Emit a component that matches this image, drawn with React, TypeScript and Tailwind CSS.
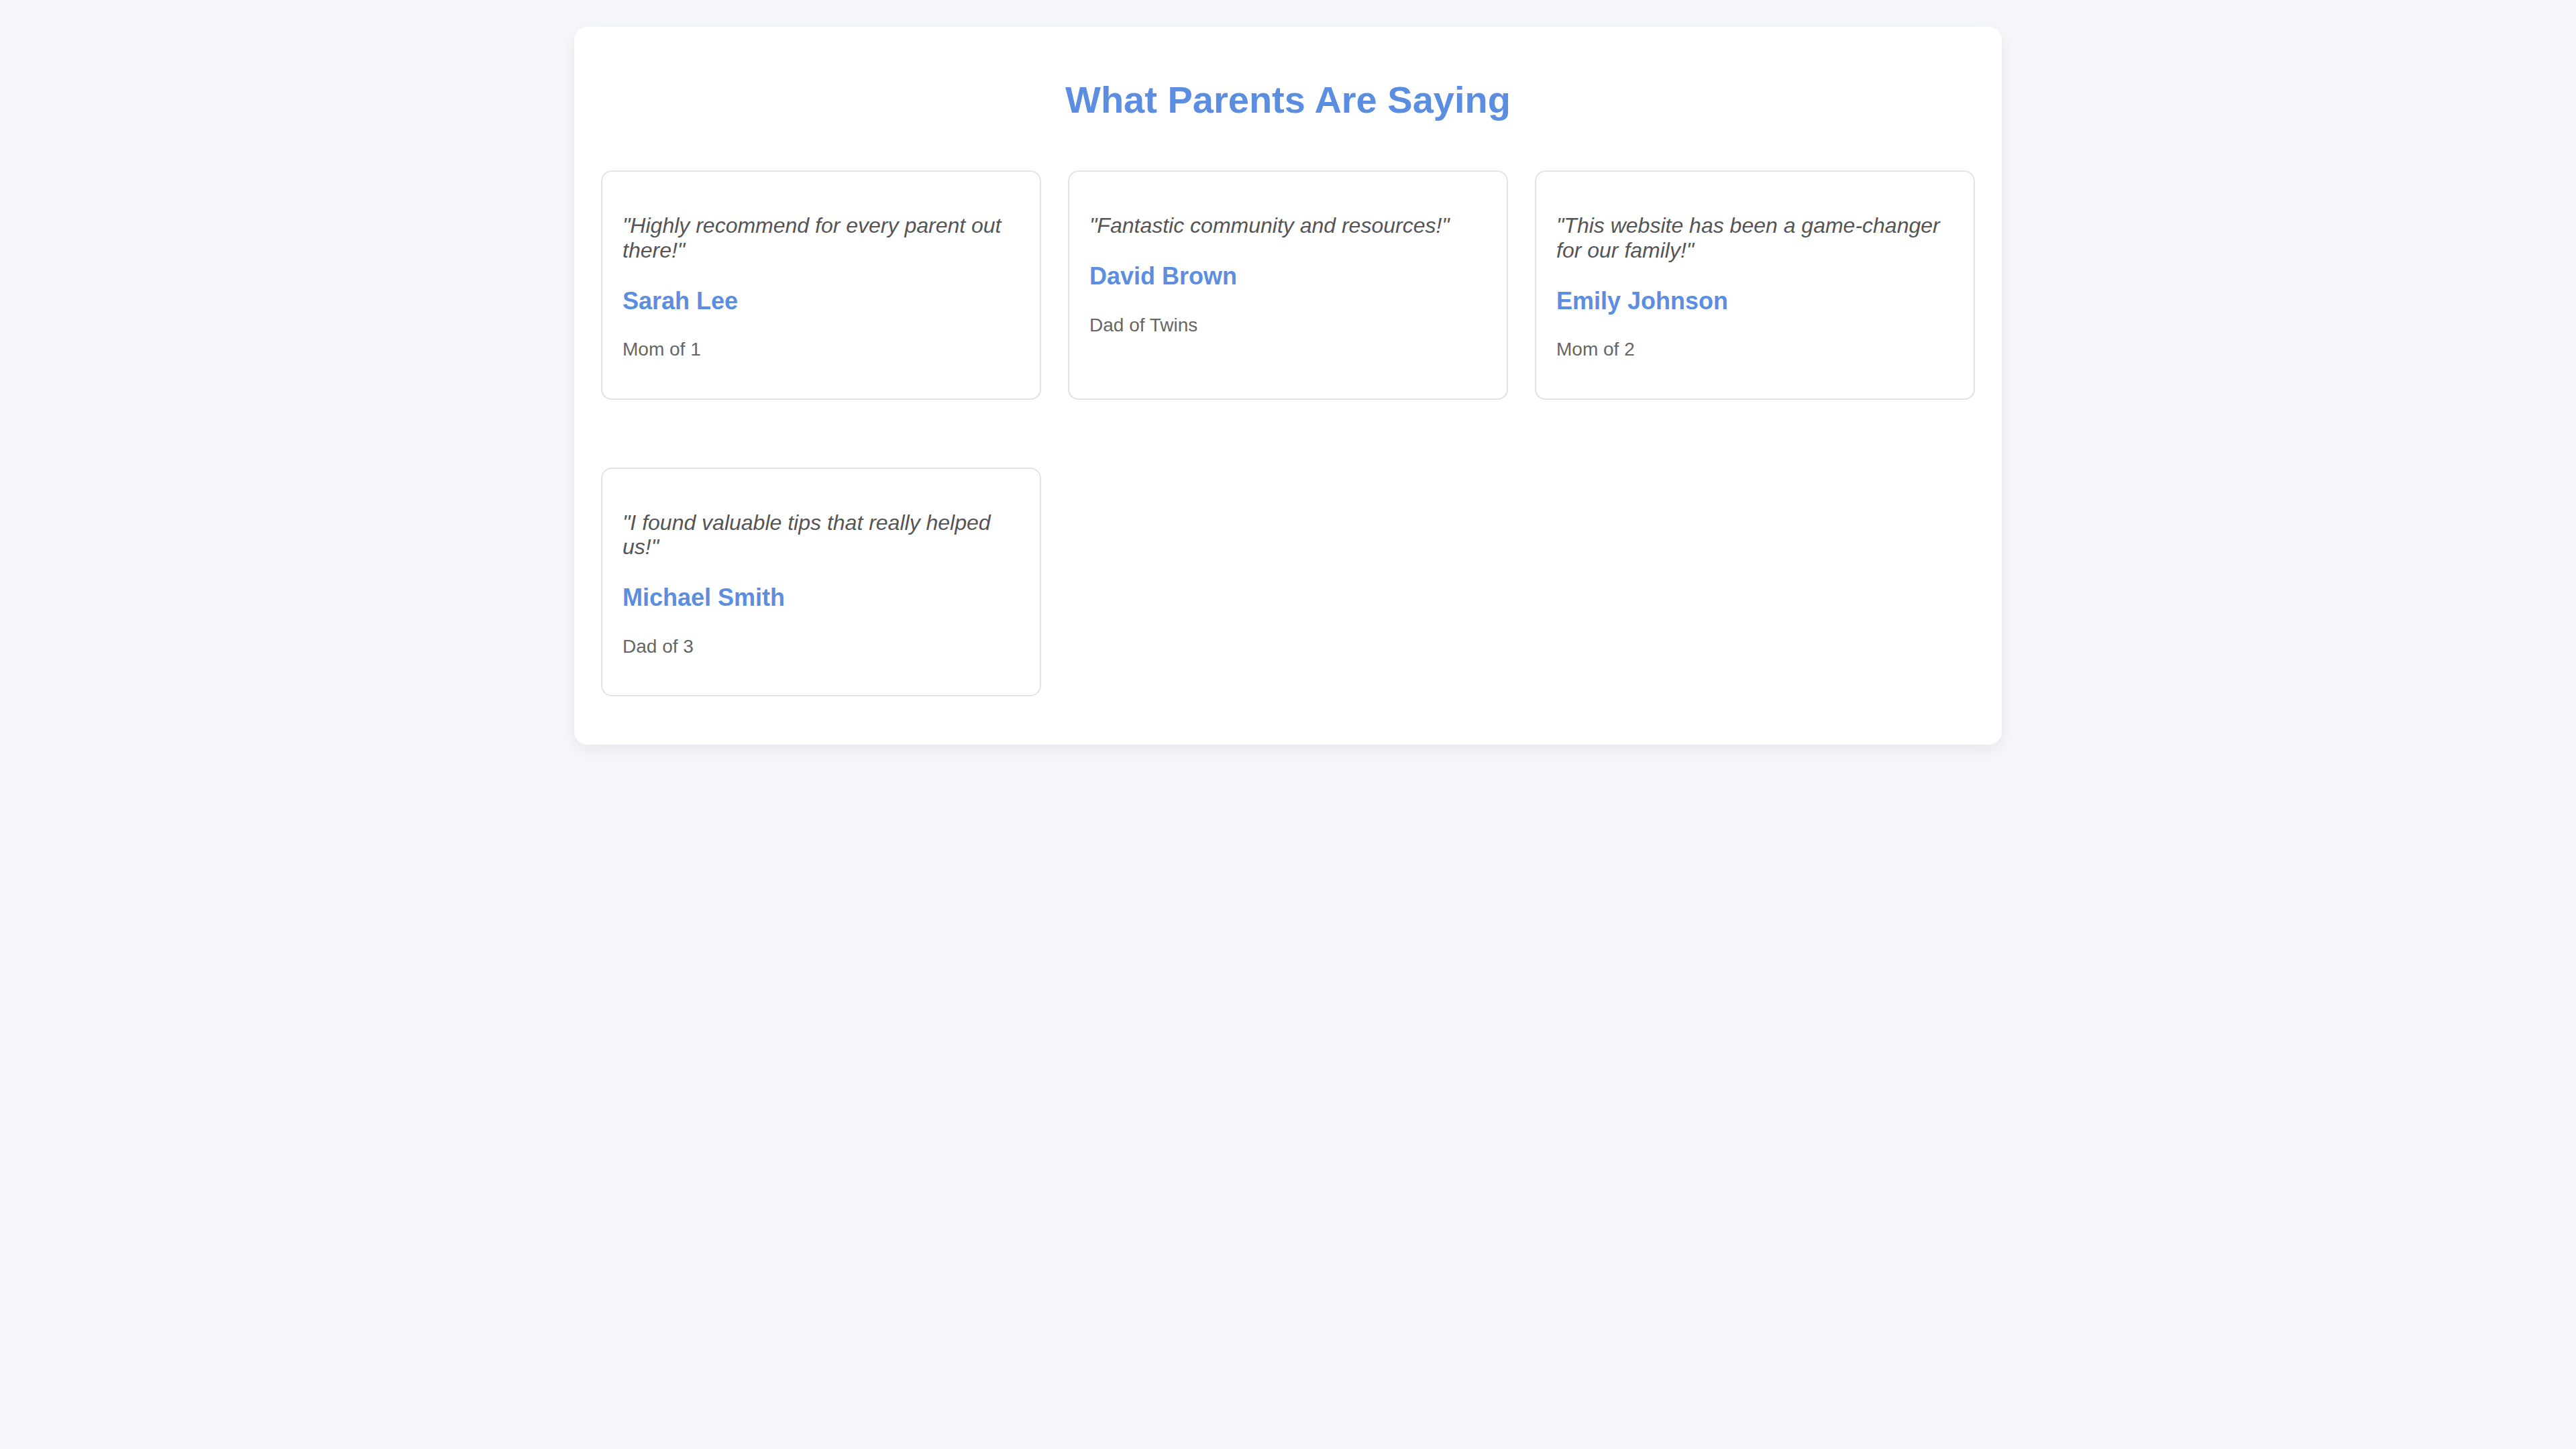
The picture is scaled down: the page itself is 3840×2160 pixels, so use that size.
const testimonials = [
  {
    quote: "Highly recommend for every parent out there!",
    name: "Sarah Lee",
    role: "Mom of 1",
  },
  {
    quote: "Fantastic community and resources!",
    name: "David Brown",
    role: "Dad of Twins",
  },
  {
    quote: "This website has been a game-changer for our family!",
    name: "Emily Johnson",
    role: "Mom of 2",
  },
  {
    quote: "I found valuable tips that really helped us!",
    name: "Michael Smith",
    role: "Dad of 3",
  },
];

function TestimonialCard({
  quote,
  name,
  role,
}: {
  quote: string;
  name: string;
  role: string;
}) {
  return (
    <div className="my-8 rounded-2xl border-2 border-[#e3e3e3] bg-white p-[30px]">
      <p className="mt-8 text-[32px] leading-[1.15] italic text-[#555]">
        "{quote}"
      </p>
      <h3 className="mt-9 text-[36px] leading-[1.15] font-bold text-[#5b8ee0]">
        {name}
      </h3>
      <p className="mt-9 mb-[26px] text-[28px] leading-[1.15] text-[#666]">
        {role}
      </p>
    </div>
  );
}

export default function App() {
  return (
    <div className="min-h-screen bg-[#f7f8fb] pt-10 font-['Liberation_Sans',Arial,sans-serif]">
      <div className="mx-auto w-[2128px] rounded-[20px] bg-white p-10 shadow-[0_8px_28px_rgba(20,30,60,0.08)]">
        <h2 className="mt-[37px] mb-[41px] text-center text-[56px] leading-[1.15] font-bold text-[#5b8ee0]">
          What Parents Are Saying
        </h2>
        <div className="grid grid-cols-3 gap-x-10 gap-y-[37px]">
          {testimonials.map((t, idx) => (
            <TestimonialCard key={idx} {...t} />
          ))}
        </div>
      </div>
    </div>
  );
}
